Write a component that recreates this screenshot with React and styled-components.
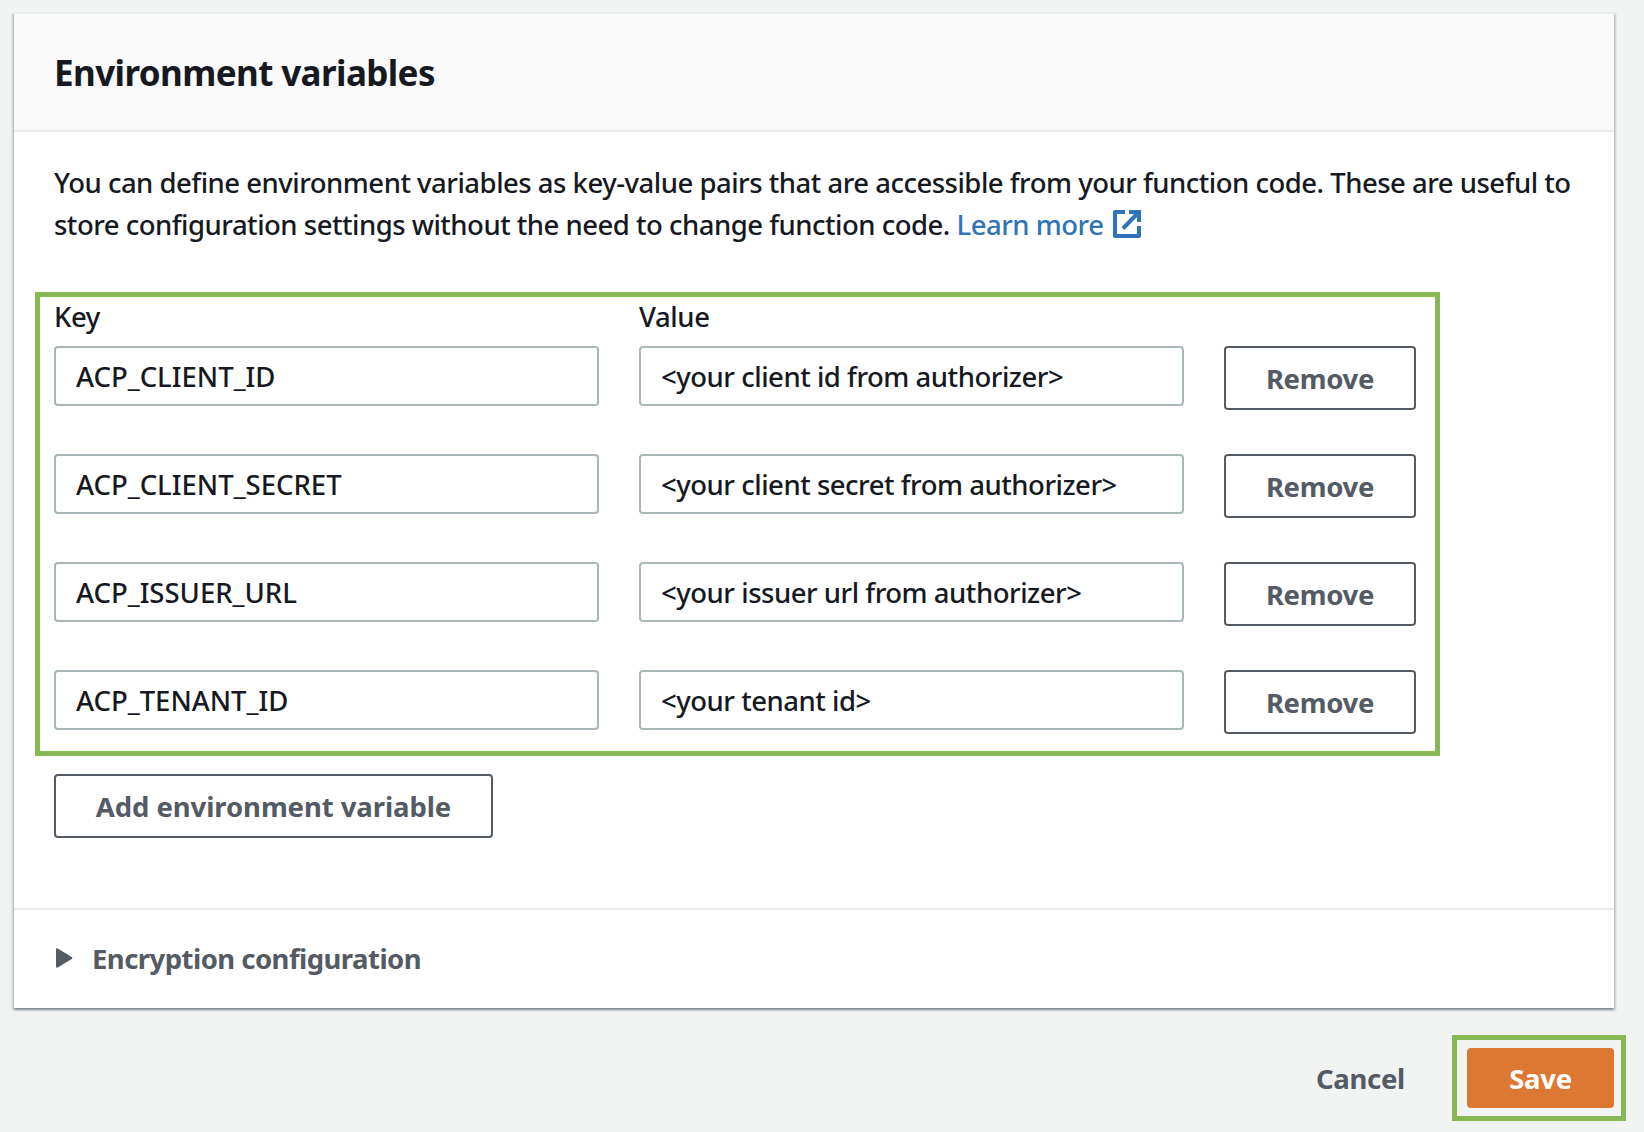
import React from "react";
import styled, { createGlobalStyle } from "styled-components";

const GlobalStyle = createGlobalStyle`
  *, *::before, *::after { box-sizing: border-box; }
  body {
    margin: 0;
    background: #f2f3f3;
    color: #16191f;
    font-family: "Noto Sans", "Open Sans", sans-serif;
    font-size: 27.5px;
    font-weight: 500;
    line-height: 42px;
  }
`;

const Page = styled.main`
  width: 1644px;
  height: 1132px;
  padding: 12px 18px 0 14px;
  overflow: hidden;
`;

const Card = styled.section`
  width: 1600px;
  background: #fff;
  border-top: 2px solid #eaeded;
  box-shadow:
    0 2px 2px 0 rgba(0, 28, 36, 0.3),
    2px 2px 2px 0 rgba(0, 28, 36, 0.15),
    -2px 2px 2px 0 rgba(0, 28, 36, 0.15);
`;

const CardHeader = styled.header`
  display: flex;
  align-items: center;
  height: 118px;
  padding: 2px 40px 0;
  background: #fafafa;
  border-bottom: 2px solid #eaeded;
`;

const Title = styled.h2`
  margin: 0;
  font-size: 35px;
  font-weight: 700;
  letter-spacing: -0.6px;
`;

const CardBody = styled.div`
  padding: 30px 40px 70px;
`;

const Description = styled.p`
  margin: 0;
  letter-spacing: -0.5px;
  white-space: nowrap;
`;

const Link = styled.a`
  color: #2f73b9;
  text-decoration: none;
`;

const ExternalIcon = styled.svg`
  width: 28px;
  height: 28px;
  margin-left: 10px;
  vertical-align: -3px;
`;

const Highlight = styled.div`
  border: 5px solid #86b953;
`;

const VariablesArea = styled(Highlight)`
  width: 1405px;
  margin: 46px 0 18px -19px;
  padding: 0 0 17px 14px;
`;

const Grid = styled.div`
  display: grid;
  grid-template-columns: 545px 545px 192px;
  column-gap: 40px;
`;

const Labels = styled(Grid)`
  height: 49px;
  line-height: 40px;
  letter-spacing: -0.4px;
`;

const Rows = styled(Grid)`
  grid-auto-rows: 64px;
  row-gap: 44px;
`;

const Input = styled.input`
  width: 100%;
  height: 60px;
  padding: 0 20px;
  border: 2px solid #aab7b8;
  border-radius: 4px;
  background: #fff;
  color: inherit;
  font: inherit;
  letter-spacing: ${(p) => p.$spacing};
  outline: none;
`;

const Button = styled.button`
  display: inline-flex;
  align-items: center;
  justify-content: center;
  width: ${(p) => p.$width || "auto"};
  height: ${(p) => (p.$variant === "primary" ? "60px" : "64px")};
  padding: 2px 0 0;
  border: ${(p) => (p.$variant === "normal" ? "2px solid #545b64" : "0")};
  border-radius: 4px;
  background: ${(p) => ({ primary: "#dd7832", normal: "#fff", link: "transparent" })[p.$variant]};
  color: ${(p) => (p.$variant === "primary" ? "#fff" : "#545b64")};
  font: inherit;
  font-weight: 700;
  letter-spacing: ${(p) => p.$spacing || "-0.3px"};
`;

const Expander = styled.div`
  display: flex;
  align-items: center;
  height: 100px;
  padding: 0 42px;
  border-top: 2px solid #eaeded;
  color: #545b64;
  font-weight: 700;
  letter-spacing: -0.54px;
`;

const Caret = styled.svg`
  width: 17px;
  height: 20px;
  margin: 0 19px 2px 0;
`;

const Footer = styled.footer`
  display: flex;
  align-items: center;
  justify-content: flex-end;
  gap: 47px;
  margin-top: 27px;
`;

const SaveArea = styled(Highlight)`
  display: flex;
  padding: 8px 7px 8px 10px;
`;

const variables = [
  { key: "ACP_CLIENT_ID", value: "<your client id from authorizer>" },
  { key: "ACP_CLIENT_SECRET", value: "<your client secret from authorizer>" },
  { key: "ACP_ISSUER_URL", value: "<your issuer url from authorizer>" },
  { key: "ACP_TENANT_ID", value: "<your tenant id>" },
];

export default function App() {
  return (
    <>
      <GlobalStyle />
      <Page>
        <Card>
          <CardHeader>
            <Title>Environment variables</Title>
          </CardHeader>
          <CardBody>
            <Description>
              You can define environment variables as key-value pairs that are accessible from your function code. These are useful to
              <br />
              store configuration settings without the need to change function code.{" "}
              <Link>
                Learn more
                <ExternalIcon viewBox="0 0 28 28" fill="none" stroke="currentColor" strokeWidth="4" strokeLinejoin="round">
                  <path d="M12 2H2V26H26V16" />
                  <path d="M16 2H26V12" strokeLinejoin="miter" />
                  <path d="M25 3L10 18.5" />
                </ExternalIcon>
              </Link>
            </Description>
            <VariablesArea>
              <Labels>
                <span>Key</span>
                <span>Value</span>
              </Labels>
              <Rows>
                {variables.map((v) => (
                  <React.Fragment key={v.key}>
                    <Input $spacing="0px" defaultValue={v.key} />
                    <Input $spacing="-0.48px" defaultValue={v.value} />
                    <Button $variant="normal">Remove</Button>
                  </React.Fragment>
                ))}
              </Rows>
            </VariablesArea>
            <Button $variant="normal" $width="439px" $spacing="-0.08px">
              Add environment variable
            </Button>
          </CardBody>
          <Expander>
            <Caret viewBox="0 0 17 20" fill="currentColor">
              <path d="M0 1.4Q0 -.4 1.7 .6L15.7 9Q17.2 10 15.7 11L1.7 19.4Q0 20.4 0 18.6Z" />
            </Caret>
            Encryption configuration
          </Expander>
        </Card>
        <Footer>
          <Button $variant="link">Cancel</Button>
          <SaveArea>
            <Button $variant="primary" $width="147px">Save</Button>
          </SaveArea>
        </Footer>
      </Page>
    </>
  );
}
